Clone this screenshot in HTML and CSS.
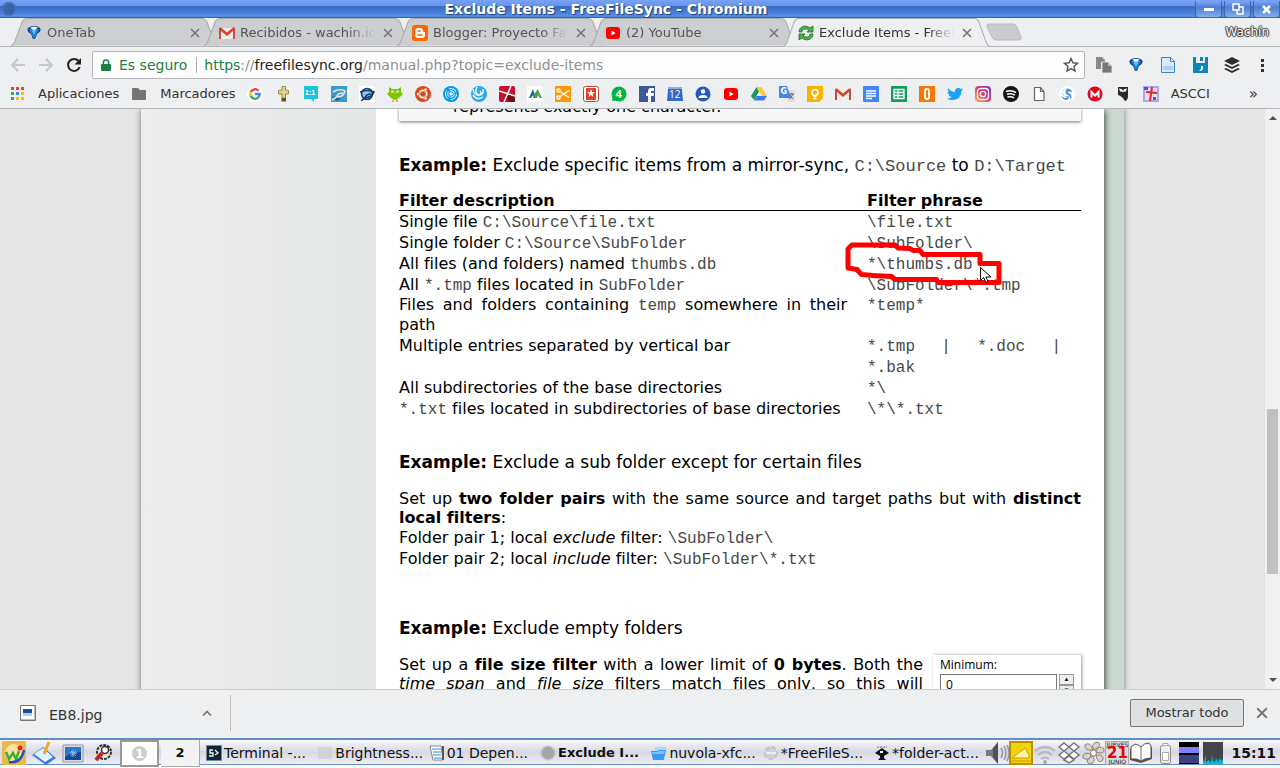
FILE: index.html
```html
<!DOCTYPE html>
<html lang="es">
<head>
<meta charset="utf-8">
<title>Exclude Items - FreeFileSync</title>
<link rel="stylesheet" href="styles.css">
</head>
<body>
<svg class="defs" aria-hidden="true">
  <symbol id="gmail" viewBox="0 0 16 16"><path fill="#eee" d="M1 3h14v11H1z"/><path fill="#d14836" d="M0 3.500q0-1 1-1h1l6 5 6-5h1q1 0 1 1V14h-2V6l-6 5-6-5v8H0z"/></symbol>
  <symbol id="yt" viewBox="0 0 16 16"><rect y="2" x="1" width="14" height="12" rx="3" fill="#f00"/><path fill="#fff" d="M6.500 5.500v5l4-2.500z"/></symbol>
  <symbol id="onetab" viewBox="0 0 16 16"><path fill="#143c80" d="M2 3q2-2 6-2t6 2q2 3-3 6l-2 5H7L5 9Q0 6 2 3z"/><path fill="#1d7fdc" d="M2.500 4L8 14l5.500-10z"/><path fill="#5fc4ff" d="M5 3h6L8 10z"/><path fill="#e4f6ff" d="M4 2.500q4-1.500 8 0L8 5z"/></symbol>
  <symbol id="close" viewBox="0 0 10 10"><path d="M1 1l8 8M9 1l-8 8" stroke="#777" stroke-width="1.600" fill="none"/></symbol>
  <symbol id="tabshape" viewBox="0 0 206 28" preserveAspectRatio="none"><path d="M0 27.500C3 27 3 25 4 23L11 4Q12.500 .500 16 .500H190Q193.500 .500 195 4L202 23C203 25 203 27 206 27.500" stroke="#a9aaac" fill="inherit"/></symbol>
</svg>

<header class="titlebar">
  <svg class="orb" viewBox="0 0 16 16"><circle cx="8" cy="8" r="6.500" fill="#3a63ae" stroke="#4c74bb" stroke-width="2" stroke-dasharray="1.500 1"/></svg>
  <h1>Exclude Items - FreeFileSync - Chromium</h1>
  <div class="winbtns">
    <button aria-label="Minimizar"><svg viewBox="0 0 12 12"><path fill="#fff" d="M1 5h10v3H1z"/></svg></button>
    <button aria-label="Restaurar"><svg viewBox="0 0 12 12"><path fill="none" stroke="#fff" stroke-width="1.500" d="M1 1h6v6H1zM7 4h4v7H5V7"/></svg></button>
    <button aria-label="Cerrar"><svg viewBox="0 0 12 12"><path fill="none" stroke="#fff" stroke-width="2.500" d="M2 3l7 7M9 3l-7 7"/></svg></button>
  </div>
</header>

<nav class="tabs">
  <div class="tab"><svg class="shape"><use href="#tabshape"/></svg><svg class="ico"><use href="#onetab"/></svg><span>OneTab</span><button aria-label="Cerrar pestaña"><svg><use href="#close"/></svg></button></div>
  <div class="tab"><svg class="shape"><use href="#tabshape"/></svg><svg class="ico"><use href="#gmail"/></svg><span>Recibidos - wachin.id</span><button aria-label="Cerrar pestaña"><svg><use href="#close"/></svg></button></div>
  <div class="tab"><svg class="shape"><use href="#tabshape"/></svg><svg class="ico" viewBox="0 0 16 16"><rect width="16" height="16" rx="3" fill="#f60"/><path fill="#fff" d="M3 6q0-3 3-3h2q3 0 3 3 0 1 1 1h1v3q0 3-3 3H6q-3 0-3-3z"/><path stroke="#f60" stroke-width="1.500" stroke-linecap="round" d="M6 6h2M6 10h4"/></svg><span>Blogger: Proyecto Fan</span><button aria-label="Cerrar pestaña"><svg><use href="#close"/></svg></button></div>
  <div class="tab"><svg class="shape"><use href="#tabshape"/></svg><svg class="ico"><use href="#yt"/></svg><span>(2) YouTube</span><button aria-label="Cerrar pestaña"><svg><use href="#close"/></svg></button></div>
  <div class="tab active"><svg class="shape"><use href="#tabshape"/></svg><svg class="ico" viewBox="0 0 16 16"><path fill="#49b04b" stroke="#1c6a22" stroke-width=".8" d="M1 7C1 2 7-1 12 3l3-2v6H9l2-2C8 3 4 4 4 7zM15 9c0 5-6 8-11 4l-3 2V9h6l-2 2c3 2 7 1 7-2z"/></svg><span>Exclude Items - FreeFi</span><button aria-label="Cerrar pestaña"><svg><use href="#close"/></svg></button></div>
  <button class="newtab" aria-label="Nueva pestaña"><svg viewBox="0 0 36 18"><path fill="#cbccce" stroke="#bbb" d="M3 1h24q3 0 4 3l4 10q1 3-2 3H10q-3 0-4-3L1 4Q0 1 3 1z"/></svg></button>
  <span class="user">Wachín</span>
</nav>

<div class="toolbar">
  <button aria-label="Atrás"><svg viewBox="0 0 16 16"><path fill="none" stroke="#c5c6c8" stroke-width="2" d="M15 8H2M8 2L2 8l6 6"/></svg></button>
  <button aria-label="Adelante"><svg viewBox="0 0 16 16"><path fill="none" stroke="#c5c6c8" stroke-width="2" d="M1 8h13M8 2l6 6-6 6"/></svg></button>
  <button aria-label="Recargar"><svg viewBox="0 0 16 16"><path fill="none" stroke="#222" stroke-width="2" d="M13 4.500A6 6 0 1 0 13.700 10"/><path fill="#222" d="M15 1v6.500H8.500z"/></svg></button>
  <div class="omnibox">
    <svg class="lock" viewBox="0 0 10 12"><path fill="#1b813e" d="M1 5h8q1 0 1 1v5q0 1-1 1H1q-1 0-1-1V6q0-1 1-1z"/><path fill="none" stroke="#1b813e" stroke-width="1.500" d="M2.500 6V3Q2.500 1 5 1t2.500 2v3"/></svg>
    <span class="secure">Es seguro</span>
    <div class="url" role="textbox" aria-label="Dirección"><span class="g">https</span><span>://</span><b>freefilesync.org</b><span>/manual.php?topic=exclude-items</span></div>
    <button aria-label="Añadir a marcadores"><svg viewBox="0 0 16 16"><path fill="none" stroke="#555" stroke-width="1.400" d="M8 1.500l1.900 4.300 4.600.5-3.500 3.100 1 4.600L8 11.600 4 14l1-4.600L1.500 6.300l4.600-.5z"/></svg></button>
  </div>
  <div class="exts">
    <button aria-label="Copiar"><svg viewBox="0 0 16 16"><path fill="#888" d="M0 0h6l3 3v2H5v7H0z"/><path fill="#777" stroke="#eee" stroke-width=".8" d="M6 5h6l4 4v7H6z"/><path fill="#bbb" d="M12 5v4h4z"/></svg></button>
    <button aria-label="OneTab"><svg><use href="#onetab"/></svg></button>
    <button aria-label="Documento"><svg viewBox="0 0 16 16"><path fill="#dcebff" stroke="#3d7fd0" d="M1.500.500h9l4 4v11h-13z"/><path fill="#a9d0fb" d="M3 9h10v4H3z"/><path fill="#fff" stroke="#3d7fd0" d="M10.500.500v4h4z"/></svg></button>
    <button aria-label="Guardar"><svg viewBox="0 0 16 16"><path fill="#0b87b5" d="M1 0h3v6h9V0h3v16H1z"/><path fill="#0b87b5" d="M8 0h3v4H8z"/><path fill="#fff" d="M9 9h2v3l-2 2H7l2-2z"/></svg></button>
    <button aria-label="Buffer"><svg viewBox="0 0 16 16"><path fill="#2c2c2c" d="M8 0l8 4-8 4-8-4zM0 8l2-1 6 3 6-3 2 1-8 4zM0 12l2-1 6 3 6-3 2 1-8 4z"/></svg></button>
    <button aria-label="Menú"><svg viewBox="0 0 16 16"><path fill="#333" d="M5 2h3v3H5zM5 7h3v3H5zM5 12h3v3H5z"/></svg></button>
  </div>
</div>

<nav class="bookmarks">
  <a href="#" class="lbl"><svg viewBox="0 0 16 16"><path fill="#ea4335" d="M2 1h3v3H2zM7 1h3v3H7zM12 1h3v3h-3z"/><path fill="#34a853" d="M2 6h3v3H2zM2 11h3v3H2z"/><path fill="#4285f4" d="M7 6h3v3H7z"/><path fill="#fbbc05" d="M12 6h3v3h-3zM7 11h3v3H7zM12 11h3v3h-3z"/></svg>Aplicaciones</a>
  <a href="#" class="lbl"><svg viewBox="0 0 16 16"><path fill="#757575" d="M1 3q0-1 1-1h5l2 2h5q1 0 1 1v8q0 1-1 1H2q-1 0-1-1z"/></svg>Marcadores</a>
  <div class="icons">
    <a href="#" aria-label="Google"><svg viewBox="0 0 16 16"><circle cx="8" cy="8" r="8" fill="#fff"/><g fill="none" stroke-width="2.300"><path stroke="#ea4335" d="M3.800 6A4.700 4.700 0 0 1 11.500 4.700"/><path stroke="#fbbc05" d="M3.800 5.800a5 5 0 0 0 0 4.400"/><path stroke="#34a853" d="M3.800 10a4.700 4.700 0 0 0 7.500 1.500"/><path stroke="#4285f4" d="M8 8h4.700q0 2-1.500 3.600"/></g></svg></a>
    <a href="#" aria-label="Cruz"><svg viewBox="0 0 16 16"><path fill="#e0d18c" stroke="#9a8747" d="M7 .500h3.500V4l3 .5V8h-3v4H7V8H3.500V4.500L7 4z"/><path fill="#6b4c12" d="M6.500 12h4.500v3.500H6.500z"/></svg></a>
    <a href="#" aria-label="1:1"><svg viewBox="0 0 16 16"><path fill="#1cc4dc" d="M1 0h14v13h-4v3l-3-3H1z"/><text x="2" y="9" class="t7">1:1</text></svg></a>
    <a href="#" aria-label="Blog"><svg viewBox="0 0 16 16"><path fill="#3b9ace" d="M0 0h16v16H0z"/><path fill="#1d5c9b" d="M1 11q6-2 9 1l-4 3z"/><path fill="none" stroke="#e8e3d3" stroke-width="1.600" d="M2 6q6-4 12-1-1 6-8 6 0-4 6-4M1 14l6-4"/></svg></a>
    <a href="#" aria-label="Diseño"><svg viewBox="0 0 16 16"><path fill="#fff" d="M0 0h16v16H0z"/><circle cx="8" cy="8" r="5.500" fill="#8dc4ed" stroke="#173c70" stroke-width="1.600"/><path fill="none" stroke="#123566" stroke-width="1.600" d="M1 6q7-3 14 0-2 5-9 6 1-4 6-4M2 15l5-4"/></svg></a>
    <a href="#" aria-label="Duolingo"><svg viewBox="0 0 16 16"><path fill="#78c800" d="M2 1l3 2h6l3-2v5l2 2-4 4-4 2-4-2L0 8l2-2z"/><circle cx="5.500" cy="5.500" r="1.600" fill="#c9f08a"/><circle cx="10.500" cy="5.500" r="1.600" fill="#c9f08a"/><path fill="#f9a01b" d="M8 6l1.500 1.500L8 9 6.500 7.500zM6 13h1v3H5zM9 13h1l1 3H9z"/></svg></a>
    <a href="#" aria-label="Ubuntu"><svg viewBox="0 0 16 16"><circle cx="8" cy="8" r="8" fill="#dd4814"/><circle cx="8" cy="8" r="3.700" fill="none" stroke="#fff" stroke-width="1.800"/><g fill="#fff" stroke="#dd4814" stroke-width=".7"><circle cx="3" cy="8" r="1.600"/><circle cx="10.500" cy="3.700" r="1.600"/><circle cx="10.500" cy="12.300" r="1.600"/></g></svg></a>
    <a href="#" aria-label="Ubuntu Mate"><svg viewBox="0 0 16 16"><circle cx="8" cy="8" r="8" fill="#0097ef"/><g fill="none" stroke="#fff"><circle cx="8" cy="8" r="5.500" stroke-dasharray="9 2.500"/><circle cx="8" cy="8" r="3.300" stroke-dasharray="6 1"/></g><circle cx="8" cy="8" r="1.700" fill="#fff"/></svg></a>
    <a href="#" aria-label="Deepin"><svg viewBox="0 0 16 16"><circle cx="8" cy="8" r="8" fill="#2ca7e8"/><path fill="none" stroke="#e9f7ff" stroke-width="1.500" d="M2 3q1 7 7 6 2-2 0-4M6 1Q3 7 8 9q5 0 4-6M2 9q4 6 10 2"/></svg></a>
    <a href="#" aria-label="Rojo"><svg viewBox="0 0 16 16"><rect width="16" height="16" rx="2" fill="#c8102e"/><path fill="#701018" d="M7 7l9 2v7H9z"/><path stroke="#fff" stroke-width="1.500" d="M12 0L5 16M0 5l16 5"/></svg></a>
    <a href="#" aria-label="M"><svg viewBox="0 0 16 16"><path fill="#fff" d="M0 0h16v16H0z"/><path fill="#1f6690" d="M2 12L6 3l3 9H6.500L6 9l-2 3z"/><path fill="#4aa34c" d="M7 9l3.500-6L15 12h-2.500L11 9l-1 3H8z"/></svg></a>
    <a href="#" aria-label="Tijeras"><svg viewBox="0 0 16 16"><path fill="#ff9800" d="M0 0h16v16H0z"/><g fill="none" stroke="#fff" stroke-width="1.500"><circle cx="3.500" cy="4.500" r="1.500"/><circle cx="3.500" cy="11.500" r="1.500"/><path d="M5 5.500l9 6M5 10.500l9-6"/></g></svg></a>
    <a href="#" aria-label="Biblia"><svg viewBox="0 0 16 16"><rect x=".5" y=".5" width="15" height="15" rx="2" fill="#fff" stroke="#b54b38"/><path fill="#e8402a" d="M3 2h10v12H3z"/><path fill="#fff" d="M8 3l1 3h3L9.500 8l1 3L8 9l-2.500 2 1-3L4 6h3z"/></svg></a>
    <a href="#" aria-label="WhatsApp"><svg viewBox="0 0 16 16"><circle cx="8" cy="8" r="7.500" fill="#00b53f"/><path fill="#00b53f" d="M1 15l1-6 5 5z"/><text x="4.500" y="12" class="t11">4</text></svg></a>
    <a href="#" aria-label="Facebook"><svg viewBox="0 0 16 16"><path fill="#3b5998" d="M0 0h16v16H0z"/><path fill="#fff" d="M9 16V10H7V7h2V5q0-3 3-3h3v3h-2q-1 0-1 1v1h3l-.5 3H12v6z"/></svg></a>
    <a href="#" aria-label="Calendario"><svg viewBox="0 0 16 16"><path fill="#3569c7" d="M1 1h14v3l1 11H0L1 4z"/><path fill="#89afe8" d="M1 1h14v2H1z"/><text x="2" y="12" class="t10">12</text></svg></a>
    <a href="#" aria-label="Contactos"><svg viewBox="0 0 16 16"><circle cx="8" cy="8" r="7.500" fill="#2756bd"/><circle cx="8" cy="5.500" r="2.200" fill="#fff"/><path fill="#fff" d="M3.500 12q0-3 4.500-3t4.500 3z"/></svg></a>
    <a href="#" aria-label="YouTube"><svg><use href="#yt"/></svg></a>
    <a href="#" aria-label="Drive"><svg viewBox="0 0 16 16"><path fill="#1b9b59" d="M5.500 1L8 5.500 3 14l-3-4z"/><path fill="#fc3" d="M5.500 1h5L16 10h-5z"/><path fill="#3b7de9" d="M5.500 10H16l-3 4.500H3z"/></svg></a>
    <a href="#" aria-label="Traductor"><svg viewBox="0 0 16 16"><path fill="#ddd" d="M7 4h9v12H9z"/><path fill="#4285f4" d="M0 0h8l4 12H0z"/><text x="1.500" y="8" class="t8">G</text><path fill="none" stroke="#667" d="M10 8h5M12.500 7v1M14 8l-3 5M11 9l3 4"/></svg></a>
    <a href="#" aria-label="Keep"><svg viewBox="0 0 16 16"><path fill="#f4b400" d="M0 0h16v12l-4 4H0z"/><circle cx="8" cy="6.500" r="3" fill="none" stroke="#fff" stroke-width="1.500"/><path stroke="#fff" stroke-width="1.300" d="M6.500 10.500h3M6.500 12.500h3"/></svg></a>
    <a href="#" aria-label="Gmail"><svg><use href="#gmail"/></svg></a>
    <a href="#" aria-label="Documentos"><svg viewBox="0 0 16 16"><rect width="16" height="16" rx="1" fill="#4285f4"/><path stroke="#fff" stroke-width="1.300" d="M3 5h10M3 7.500h10M3 10h10M3 12.500h6"/></svg></a>
    <a href="#" aria-label="Hojas"><svg viewBox="0 0 16 16"><rect width="16" height="16" rx="1" fill="#0f9d58"/><path fill="none" stroke="#fff" stroke-width="1.300" d="M3 3.500h10v9H3zM3 6.500h10M3 9.500h10M7 3v9"/></svg></a>
    <a href="#" aria-label="Outlook"><svg viewBox="0 0 16 16"><path fill="#ff7300" d="M0 0h16v16H0z"/><rect x="6" y="3" width="4" height="10" rx="2" fill="none" stroke="#fff" stroke-width="2"/></svg></a>
    <a href="#" aria-label="Twitter"><svg viewBox="0 0 16 16"><path fill="#1da1f2" d="M1 2q3 4 7 4 0-4 3-4 2 0 3 1l2-1-1.500 2 1.500-.5L14.500 5Q14 14 5 14 2 14 0 12.500q3 0 4.500-1.500Q2 10.500 1.500 9H3Q.5 8 .5 5.500L2 6Q0 4 1 2z"/></svg></a>
    <a href="#" aria-label="Instagram"><svg viewBox="0 0 16 16"><defs><linearGradient id="ig" x1="0" y1="1" x2="1" y2="0"><stop stop-color="#fec053"/><stop offset=".5" stop-color="#e1306c"/><stop offset="1" stop-color="#6a3cd0"/></linearGradient></defs><rect width="16" height="16" rx="4" fill="url(#ig)"/><rect x="2.500" y="2.500" width="11" height="11" rx="3" fill="none" stroke="#fff" stroke-width="1.300"/><circle cx="8" cy="8" r="2.700" fill="none" stroke="#fff" stroke-width="1.300"/></svg></a>
    <a href="#" aria-label="Spotify"><svg viewBox="0 0 16 16"><circle cx="8" cy="8" r="8" fill="#191414"/><path fill="none" stroke="#fff" stroke-width="1.500" d="M3 5.500q5-2 10 1M4 8.300q4-1.500 8 .9M4.500 11q3.500-1 6.500.8"/></svg></a>
    <a href="#" aria-label="Página"><svg viewBox="0 0 16 16"><path fill="#fff" stroke="#666" stroke-width="1.200" d="M3.500 1.500h6l3.500 4v9H3.500zM9.500 1.500v4H13"/></svg></a>
    <a href="#" aria-label="Simplenote"><svg viewBox="0 0 16 16"><circle cx="8" cy="8" r="8" fill="#fff"/><path fill="#4895d9" d="M8 2.500Q3.500 3 3.500 6.500T7 10t3 1.500L8 14q-4 0-6-4 2 2 5 2 2-1-1-2-3-2-2-5 1-2 4-2.500zM8 2.500q4 0 5.500 4-1-1-4-1-1.500.500 1 2 3 2 1.500 5l-1 .5q.500-3-3-4.500-3-2 0-6z"/></svg></a>
    <a href="#" aria-label="Mega"><svg viewBox="0 0 16 16"><circle cx="8" cy="8" r="7.500" fill="#e6001a"/><path fill="none" stroke="#fff" stroke-width="2" d="M4.500 11.500V6L8 9.500 11.500 6v5.500"/></svg></a>
    <a href="#" aria-label="Búho"><svg viewBox="0 0 16 16"><path fill="#2b2b2b" d="M3 1h10v10q-1 4-3 4-3-5-7-6z"/><path fill="none" stroke="#fff" d="M4 3q4 0 4 3 0-3 4-3"/><circle cx="6" cy="4.500" r="1.200" fill="#fff"/><circle cx="10" cy="4.500" r="1.200" fill="#fff"/></svg></a>
    <a href="#" aria-label="Cruz roja"><svg viewBox="0 0 16 16"><path fill="#a7a9f2" d="M0 0h16v16H0z"/><path fill="#f5d9e5" d="M2 2h12v12H2z"/><path stroke="#e0253a" stroke-width="2" d="M9 1L7 15M3 6l11 1"/><path fill="#5b50db" d="M10 11h3v3h-3zM1 1h4v3H1z"/></svg></a>
  </div>
  <a href="#" class="lbl">ASCCI</a>
  <button class="more" aria-label="Más marcadores">»</button>
</nav>

<main class="viewport">
  <div class="canvas">
    <div class="sheet">
      <article>
        <div class="note"><p>represents exactly one character.</p></div>
        <h2><b>Example:</b> Exclude specific items from a mirror-sync, <code>C:\Source</code> to <code>D:\Target</code></h2>
        <table>
          <thead><tr><th>Filter description</th><th>Filter phrase</th></tr></thead>
          <tbody>
          <tr><td>Single file <code>C:\Source\file.txt</code></td><td><code>\file.txt</code></td></tr>
          <tr><td>Single folder <code>C:\Source\SubFolder</code></td><td><code>\SubFolder\</code></td></tr>
          <tr><td>All files (and folders) named <code>thumbs.db</code></td><td class="marked"><code>*\thumbs.db</code>
            <svg class="scribble" viewBox="0 0 162 48" aria-hidden="true"><path fill="none" stroke="#f00" stroke-width="5" stroke-linejoin="round" d="M9 5H52L55 8 67 8.500l3 2h7l3 4 10 0H137V23.500H156V42.500H95L93.500 39.500H52L48.500 36.500 30 35.500 18.500 34.500 14 29.500 5 28V9z"/><path fill="#fff" stroke="#000" d="M137.500 27.500v13l3-3 2.500 5 2-1-2-4.500h5z"/></svg></td></tr>
          <tr><td>All <code>*.tmp</code> files located in <code>SubFolder</code></td><td><code>\SubFolder\*.tmp</code></td></tr>
          <tr class="tight"><td>Files and folders containing <code>temp</code> somewhere in their path</td><td><code>*temp*</code></td></tr>
          <tr><td>Multiple entries separated by vertical bar</td><td><code>*.tmp | *.doc | *.bak</code></td></tr>
          <tr><td>All subdirectories of the base directories</td><td><code>*\</code></td></tr>
          <tr><td><code>*.txt</code> files located in subdirectories of base directories</td><td><code>\*\*.txt</code></td></tr>
          </tbody>
        </table>
        <h2 class="second"><b>Example:</b> Exclude a sub folder except for certain files</h2>
        <p>Set up <b>two folder pairs</b> with the same source and target paths but with <b>distinct local filters</b>:</p>
        <ul><li>Folder pair 1; local <i>exclude</i> filter: <code>\SubFolder\</code></li><li>Folder pair 2; local <i>include</i> filter: <code>\SubFolder\*.txt</code></li></ul>
        <h2 class="third"><b>Example:</b> Exclude empty folders</h2>
        <div class="split">
          <p>Set up a <b>file size filter</b> with a lower limit of <b>0 bytes</b>. Both the <i>time span</i> and <i>file size</i> filters match files only, so this will</p>
          <form class="minbox">
            <label for="min">Minimum:</label>
            <div class="spin"><input id="min" type="text" value="0"><div><button type="button" aria-label="Más">▲</button><button type="button" aria-label="Menos">▼</button></div></div>
          </form>
        </div>
      </article>
    </div>
  </div>
  <div class="scrollbar" aria-hidden="true"><i class="up"></i><div class="track"><div class="thumb"></div></div><i class="down"></i></div>
</main>

<section class="downloads">
  <button class="file"><svg viewBox="0 0 16 16"><path fill="#fff" stroke="#777" d="M.500.500h15v15H.500z"/><path fill="#bbb" d="M14 1h1v14H1v-1h13z"/><path fill="#1d4c9b" d="M3 4h9v7H3z"/><path fill="#9fd0f5" d="M3 8h9v3H3z"/></svg><span>EB8.jpg</span><svg class="chev" viewBox="0 0 10 6"><path fill="none" stroke="#777" stroke-width="1.700" d="M1 5.500l4-4 4 4"/></svg></button>
  <button class="all">Mostrar todo</button>
  <button class="x" aria-label="Cerrar"><svg><use href="#close"/></svg></button>
</section>

<footer class="taskbar">
  <div class="launch">
    <button aria-label="Inicio"><svg viewBox="0 0 24 24"><path fill="#e9b94d" d="M0 0h24v24H0z"/><circle cx="12" cy="12" r="9" fill="#f7e2a0"/><path fill="none" stroke="#3eac2c" stroke-width="2.500" d="M4 11l3 7 4-6 3 6 3-8"/><path fill="none" stroke="#1f57b8" stroke-width="2.500" d="M7 21q12 2 15-12"/><circle cx="18" cy="7" r="2.500" fill="#e22"/></svg></button>
    <button aria-label="Escritorio"><svg viewBox="0 0 24 24"><path fill="#2f7fdb" d="M0 14l11-8 13 11-10 7z"/><path fill="#e4f1ff" d="M2 13l9-6 10 9-8 5z"/><path stroke="#f6a81c" stroke-width="3" d="M17 1l-5 12"/></svg></button>
    <button aria-label="Pantalla"><svg viewBox="0 0 24 24"><path fill="#d6dbe6" stroke="#999" d="M1 4h20v17H1z"/><path fill="#15489c" d="M3 6h16v13H3z"/><path fill="#2f74cc" d="M3 6h16v5q-8 0-16 5z"/><path fill="none" stroke="#9cc4f2" d="M8 12h7M11 9v7M9 10l5 5M14 10l-5 5"/></svg></button>
    <button aria-label="Buscar"><svg viewBox="0 0 24 24"><circle cx="12" cy="11" r="7" fill="#ede5cf" stroke="#333" stroke-width="2" stroke-dasharray="3 1"/><circle cx="13" cy="9" r="3.500" fill="#fff" stroke="#333" stroke-width="1.500"/><path stroke="#c3202c" stroke-width="4" d="M10 12l-6 7"/></svg></button>
  </div>
  <div class="pager"><button class="on"><span>1</span></button><button>2</button></div>
  <div class="tasks">
    <button><svg viewBox="0 0 16 16"><path fill="#123" stroke="#789" d="M.500.500h15v15H.500z"/><path fill="none" stroke="#dff" stroke-width="1.300" d="M7 5H4v3h3v3H3M9 5l3 3-3 2"/></svg><span>Terminal -...</span></button>
    <button><svg viewBox="0 0 16 16"><path fill="#ccc" opacity=".6" d="M1 2h14v12H1z"/></svg><span>Brightness...</span></button>
    <button><svg viewBox="0 0 16 16"><path fill="#fff" stroke="#888" d="M1 1h11l2 14H4z"/><path stroke="#6fb6dd" stroke-width="1.500" d="M3 4h9M4 7h8M4 10h8M5 13h8"/><path fill="#654" d="M13 1h2v14h-2z"/></svg><span>01 Depen...</span></button>
    <button class="cur"><svg viewBox="0 0 16 16"><circle cx="8" cy="8" r="6.500" fill="#a3a5a9" stroke="#b6b7bb" stroke-width="2" stroke-dasharray="1.500 1"/></svg><span>Exclude I...</span></button>
    <button><svg viewBox="0 0 16 16"><path fill="#a9d6fb" d="M4 2h11v9H4z"/><path fill="#3c98f0" d="M0 6h6l2-1h7l-2 9q0 1-1 1H2z"/><path fill="#7fc1ff" d="M1 7h5l2-1h6l-1 3H2z"/></svg><span>nuvola-xfc...</span></button>
    <button><svg viewBox="0 0 16 16"><circle cx="8" cy="8" r="6" fill="#d2d2d4" stroke="#c2c2c4" stroke-width="2" stroke-dasharray="5 2"/><path stroke="#eee" stroke-width="2" d="M3 8h10"/></svg><span>*FreeFileS...</span></button>
    <button><svg viewBox="0 0 16 16"><path fill="#111" d="M1 8l7-5 7 5-5 3v2l2 2H4l2-2v-2z"/><path fill="none" stroke="#85b" stroke-dasharray="2 1" d="M3 2h10"/><path fill="#fff" d="M6 6h3v2H6z"/></svg><span>*folder-act...</span></button>
  </div>
  <div class="tray">
    <svg viewBox="0 0 24 24"><path fill="#777c83" d="M1 9h5l7-8v22l-7-8H1z"/><path fill="#4d5157" d="M8 8l5-7v22l-5-7z"/><path fill="none" stroke="#999" stroke-width="1.500" d="M16 7q3 5 0 10M19 5q4 7 0 14M22 4q4 8 0 16"/></svg>
    <svg viewBox="0 0 24 24"><path fill="#f2d40e" stroke="#b99000" stroke-width="2" d="M1 1h22v22H1z"/><path fill="#fff3a0" stroke="#c9a000" d="M3 17L16 7l4 7v3z"/><path stroke="#c9a000" d="M2 20h20"/></svg>
    <svg viewBox="0 0 24 24"><g fill="none" stroke="#bbbcc3" stroke-width="2.500"><path d="M2 10q10-8 20 0M5 14q7-6 14 0M8 18q4-3 8 0"/></g><circle cx="12" cy="21" r="2" fill="#aaa"/></svg>
    <svg viewBox="0 0 24 24"><path fill="#fff" stroke="#777" stroke-width="1.500" d="M7 2l5 4-5 4-5-4zM17 2l5 4-5 4-5-4zM7 10l5 4-5 4-5-4zM17 10l5 4-5 4-5-4zM7 19l5 3 5-3-5-4z"/></svg>
    <svg viewBox="0 0 24 24"><g fill="#ddd4c8" stroke="#8d8379"><path d="M12 9Q3 10 4 4q5-4 8 5zM13 9Q9 2 17 1q5 3-4 8zM15 11q2-8 8-3 1 6-8 3zM15 14q8-1 7 5-5 5-7-5zM12 15q4 7-4 8-5-4 4-8zM10 13q-1 8-8 4-1-7 8-4z"/><circle cx="12.500" cy="12" r="3" fill="#f5f5f5"/></g></svg>
    <div class="cal"><small>JUEVES</small><b>21</b><small>JUNIO</small></div>
    <svg viewBox="0 0 24 24"><path fill="#6b4a36" d="M1 8l10 2 12-4v12l-11 4-11-3z"/><path fill="#fff" stroke="#555" d="M2 6l4-3q4 1 6 3 3-4 8-4l2 3v12q-6 0-10 3-4-3-10-2z"/><path stroke="#777" d="M12 6v14"/></svg>
    <svg viewBox="0 0 24 24"><rect x="7.500" y="4.500" width="10" height="18" rx="2" fill="#eee" stroke="#888"/><path fill="#fff" stroke="#aaa" d="M10 2.500h5v2h-5zM9.500 11.500h6v8h-6z"/></svg>
    <svg viewBox="0 0 24 24"><path fill="#000" d="M2 1h20v22H2z"/><path fill="#8080ff" d="M2 6h20v6H2z"/><path fill="#404080" d="M2 14h20v8H2z"/></svg>
    <svg viewBox="0 0 24 24"><path fill="#444549" d="M2 1h20v22H2z"/><path fill="#0bd" d="M2 23v-5l1 3 2-7v7l3-2 2 3 1-8 1 6 2 1 1-4 2 4 2-4 1 3 2-2v5z"/></svg>
    <time>15:11</time>
  </div>
</footer>
</body>
</html>
```
FILE: styles.css
```css
* { box-sizing: border-box; }
html, body { height: 100%; }
body { margin: 0; display: flex; flex-direction: column; overflow: hidden; font: 14px/18px "DejaVu Sans", sans-serif; color: #333; background: #eeeff1; }
button { font: inherit; color: inherit; border: 0; background: none; padding: 0; display: flex; align-items: center; justify-content: center; }
a { color: inherit; text-decoration: none; }
svg { display: block; flex: none; width: 16px; height: 16px; }
.defs { position: absolute; width: 0; height: 0; }

.titlebar { flex: none; display: flex; align-items: center; height: 18px; background: linear-gradient(#79a3f5, #6294ef 33%, #3c69b8 34%, #4d86e2 80%, #5b95f4 90%, #2f4f8f); }
.titlebar h1 { flex: 1; margin: 0; font: bold 14px/17px "DejaVu Sans", sans-serif; color: #fff; text-align: center; text-shadow: 1px 1px 1px #223f77; }
.orb { margin-left: 1px; }
.winbtns { display: flex; gap: 2px; }
.winbtns button { width: 27px; height: 17px; border: 1px solid #3d66b0; border-top: 0; border-radius: 0 0 4px 4px; background: linear-gradient(#7ba6f3, #4e7ed2 40%, #86abee); }
.winbtns svg { width: 12px; height: 12px; }

.tabs { flex: none; display: flex; height: 29px; padding-left: 11px; border-bottom: 1px solid #b5b6b9; background: #eeeff1; }
.tab { position: relative; flex: 0 1 207px; min-width: 0; display: flex; align-items: center; margin-right: -14px; padding: 0 18px 0 15px; height: 29px; color: #555; }
.shape { position: absolute; left: 0; top: 0; width: 100%; height: 28px; fill: #cdced0; }
.tab .ico, .tab span, .tab button { position: relative; }
.tab span { flex: 1 1 0; min-width: 0; margin: 0 8px 0 5px; overflow: hidden; white-space: nowrap; -webkit-mask: linear-gradient(90deg, #000 80%, transparent); mask: linear-gradient(90deg, #000 80%, transparent); font-size: 13px; }
.tab button svg { width: 10px; height: 10px; }
.tab.active { z-index: 1; color: #333; }
.tab.active .shape { fill: #eeeff1; height: 29px; }
.newtab { align-self: center; margin-left: 10px; }
.newtab svg { width: 36px; height: 18px; }
.user { margin: 5px 11px 0 auto; font-size: 12px; color: #fff; text-shadow: 1px 0 1px #333, -1px 0 1px #333, 0 1px 1px #333, 0 -1px 1px #333; }

.toolbar { flex: none; display: flex; align-items: center; height: 34px; padding: 2px 8px 0 10px; gap: 12px; }
.omnibox { flex: 1; display: flex; align-items: center; height: 28px; border: 1px solid #b5b6b9; border-radius: 2px; background: #fdfdfd; padding: 0 5px 0 8px; margin-left: -2px; }
.lock { width: 10px; height: 12px; }
.secure { margin: 0 7px 0 8px; padding-right: 9px; border-right: 1px solid #aaa; color: #1b813e; line-height: 16px; }
.url { flex: 1; white-space: nowrap; color: #909193; }
.url .g { color: #1b813e; }
.url b { font-weight: normal; color: #222; }
.exts { display: flex; gap: 16px; margin-left: -1px; }

.bookmarks { flex: none; display: flex; align-items: center; height: 28px; padding: 0 12px 2px 9px; border-bottom: 1px solid #b5b6b9; font-size: 13px; }
.lbl { display: flex; align-items: center; gap: 13px; margin-right: 12px; }
.icons { display: flex; gap: 12px; margin-right: 12px; margin-left: -1px; }
.bookmarks .more { margin-left: auto; padding: 0 10px; font-size: 15px; }
.t7, .t8, .t10, .t11 { fill: #fff; font: bold 7px "DejaVu Sans", sans-serif; }
.t7 { font: bold 7px "Liberation Sans", sans-serif; }
.t8 { font-size: 8px; }
.t10 { font: 10px "Open Sans", sans-serif; }
.t11 { font: bold 11px "Open Sans", sans-serif; }

.viewport { flex: 1; min-height: 0; display: flex; overflow: hidden; background: #e5e5e5; }
.canvas { flex: 1; min-width: 0; overflow: hidden; padding: 0 141px; }
.sheet { display: flex; justify-content: flex-end; padding-right: 20px; min-height: 100%; background: linear-gradient(90deg, #ececec, #e3e6e4 25%, #c9d7ce); box-shadow: 0 0 6px #777; }
article { width: 728px; max-width: 100%; padding: 0 23px; background: #fff; box-shadow: 4px 0 5px -2px #666; font-size: 16px; line-height: 19px; color: #000; text-align: justify; }
code { font-family: "Liberation Mono", monospace; font-size: inherit; line-height: 1; color: #484848; }
.note { height: 12px; background: #f7f7f7; box-shadow: 0 1px 3px #777; display: flex; align-items: flex-end; padding: 0 54px 5px; }
.note p { margin: 0; }
h2 { margin: 33px 0 0; font-size: 17px; line-height: 22px; font-weight: normal; text-align: left; }
table { width: 100%; margin-top: 16px; border-collapse: collapse; line-height: 21px; }
th { height: 18px; line-height: 17px; padding: 0; border-bottom: 1px solid #000; text-align: left; }
td { padding: 0 20px 0 0; vertical-align: top; text-align: justify; }
th:last-child { width: 214px; }
.tight { line-height: 20px; }
.marked { position: relative; }
.scribble { position: absolute; left: -24px; top: -13px; width: 162px; height: 48px; }
.second { margin-top: 32px; }
.third { margin-top: 48px; }
h2 + p { margin: 16px 0 0; }
ul { list-style: none; margin: 0; padding: 0; line-height: 21px; }
.split { display: flex; gap: 10px; margin-top: 16px; }
.split p { flex: 1; margin: 0; text-align-last: justify; }
.minbox { width: 148px; height: 80px; padding: 1px 7px; box-shadow: 1px 0 3px #999; font: 12px/18px "Open Sans", sans-serif; text-align: left; }
.spin { display: flex; gap: 2px; }
.spin input { flex: 1; min-width: 0; height: 22px; border: 1px solid #777; padding: 0 5px; font: inherit; }
.spin button { width: 15px; height: 11px; border: 1px solid #999; background: #eee; font-size: 6px; color: #000; }

.scrollbar { width: 15px; display: flex; flex-direction: column; align-items: center; background: #f1f1f1; }
.up, .down { margin: 7px 0; border: 4px solid transparent; border-top: 0; border-bottom-color: #505050; }
.down { transform: rotate(180deg); }
.track { flex: 1; display: flex; flex-direction: column; justify-content: flex-end; padding-bottom: 97px; }
.thumb { width: 11px; height: 165px; background: #c1c1c1; }

.downloads { flex: none; display: flex; align-items: center; height: 49px; padding: 0 12px 2px 20px; border-top: 1px solid #ccc; background: #eeeff1; }
.file { width: 211px; height: 36px; justify-content: flex-start; padding-right: 18px; border-right: 1px solid #bbb; }
.file span { flex: 1; margin-left: 13px; text-align: left; padding-top: 4px; }
.file .chev { width: 10px; height: 6px; }
.all { margin-left: auto; margin-right: 12px; width: 114px; height: 28px; border: 1px solid #777; border-radius: 2px; background: #dfe0e2; font-size: 13px; }
.x svg { width: 12px; height: 12px; }

.taskbar { flex: none; display: flex; align-items: center; height: 30px; border-top: 2px solid #5f8fc9; padding: 0 4px 2px 2px; color: #111; background: linear-gradient(#f8f8fc, #d8d8e4 12px, #ededf2 24px, #5f8fc9 24px, #5f8fc9 25px, #fff 25px); }
.launch { display: flex; gap: 6px; }
.launch svg, .tray svg { width: 24px; height: 24px; }
.pager { display: flex; gap: 2px; margin-left: 4px; font: bold 13px "DejaVu Sans", sans-serif; }
.pager button { width: 39px; height: 27px; background: #f3f3f6; border-right: 1px solid #aaa; border-bottom: 1px solid #aaa; }
.pager .on { border: 2px solid #999; background: #fff; color: #fff; }
.on span { width: 15px; line-height: 15px; border-radius: 50%; background: #ccc; }
.tasks { flex: 1; display: flex; min-width: 0; margin-left: 6px; }
.tasks button { flex: 1 1 0; min-width: 0; justify-content: flex-start; gap: 2px; white-space: nowrap; }
.tasks .cur { font-weight: bold; font-size: 13px; }
.tray { display: flex; align-items: center; }
.cal { width: 24px; height: 24px; background: #ddd; border: 1px solid #aaa; display: flex; flex-direction: column; align-items: center; justify-content: center; color: #111; }
.cal small { font: 6px/6px "DejaVu Sans", sans-serif; }
.cal b { font: bold 15px/11px "DejaVu Sans", sans-serif; color: #e00; }
time { margin-left: 6px; font: bold 14px "DejaVu Sans", sans-serif; }
```
